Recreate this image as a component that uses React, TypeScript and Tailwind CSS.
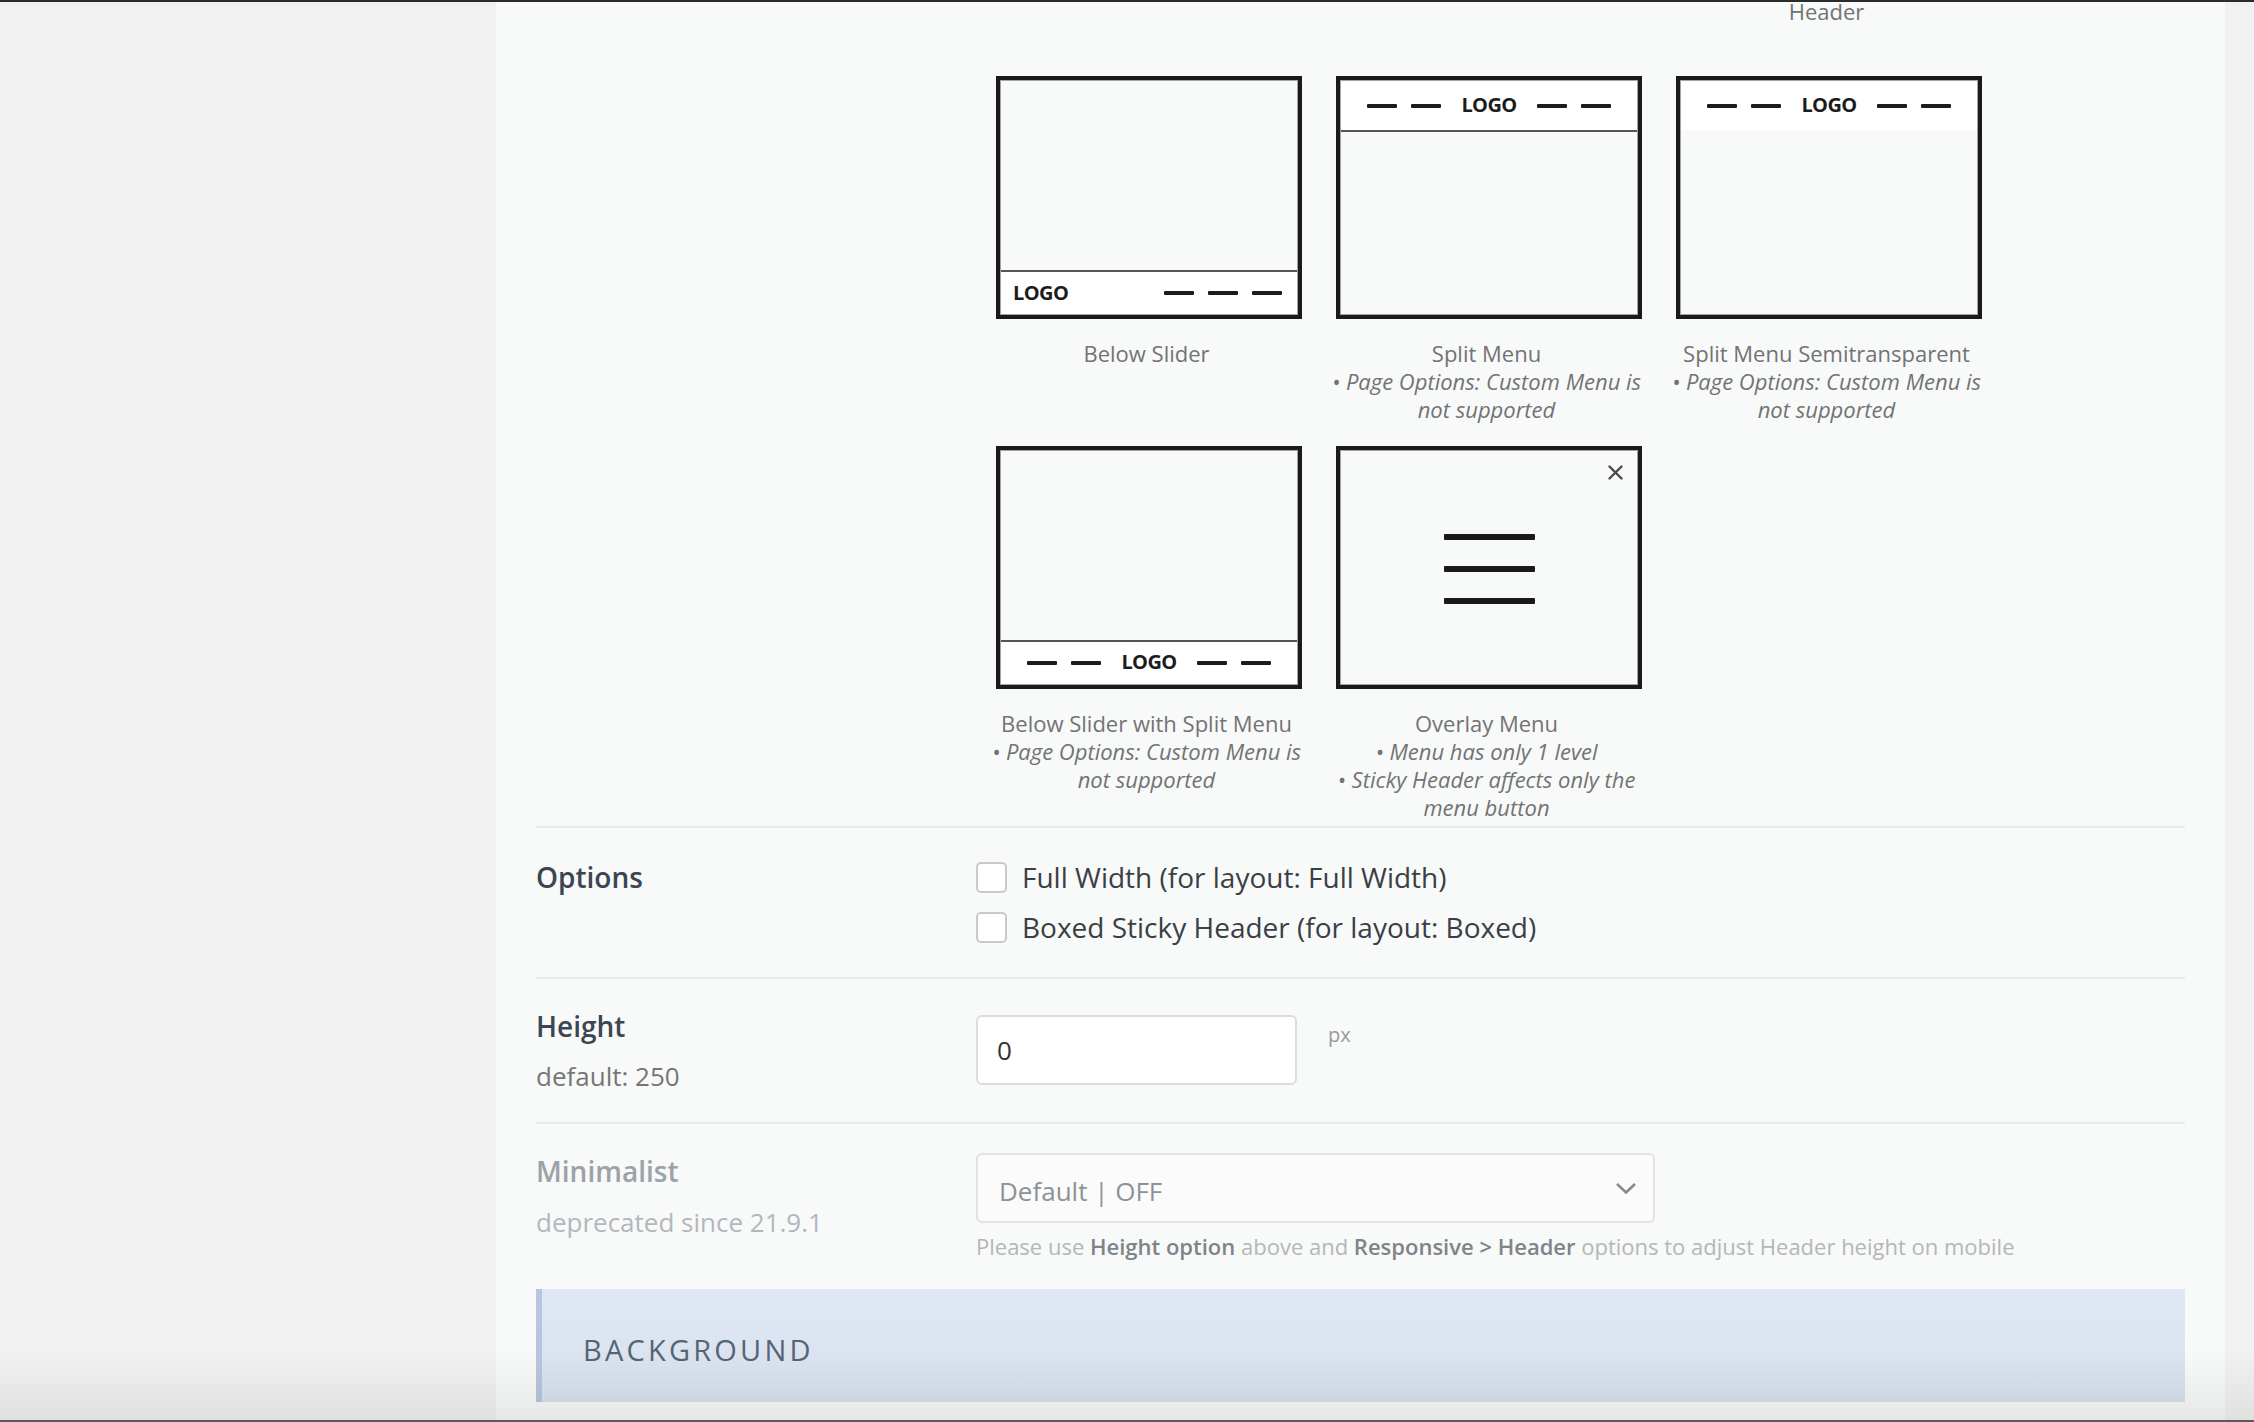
import React from "react";

function Dash() {
  return <span className="block h-[4px] w-[30px] rounded-[1px] bg-[#1c1c1c]" />;
}

function Logo() {
  return (
    <span className="text-[20px] font-bold leading-none tracking-[-0.6px] text-[#1c1c1c]">
      LOGO
    </span>
  );
}

function SplitGroup() {
  return (
    <div className="flex items-center">
      <Dash />
      <span className="ml-[14px]">
        <Dash />
      </span>
      <span className="ml-[20px]">
        <Logo />
      </span>
      <span className="ml-[20px]">
        <Dash />
      </span>
      <span className="ml-[14px]">
        <Dash />
      </span>
    </div>
  );
}

function Frame({ children, relative }: { children?: React.ReactNode; relative?: boolean }) {
  return (
    <div className="mx-auto h-[243px] w-[306px] border-4 border-[#1a1a1a] bg-[#f8f9f9]">
      <div className={`flex h-full flex-col border border-[#a3a3a3] ${relative ? "relative" : ""}`}>
        {children}
      </div>
    </div>
  );
}

function Caption({ title, notes }: { title: string; notes?: string[] }) {
  return (
    <div className="mt-[20px] pr-[5px] text-center text-[22px] leading-[28px] text-[#737373]">
      <div>{title}</div>
      {notes?.map((n) => (
        <div key={n} className="italic">
          {"\u2022 " + n}
        </div>
      ))}
    </div>
  );
}

function Item({ children, title, notes }: { children: React.ReactNode; title: string; notes?: string[] }) {
  return (
    <div className="w-[340px]">
      {children}
      <Caption title={title} notes={notes} />
    </div>
  );
}

export default function App() {
  const cm = "Page Options: Custom Menu is not supported";
  return (
    <div className="relative flex h-[1422px] w-full flex-col overflow-hidden font-['Open_Sans',sans-serif]">
      <div className="h-[2px] shrink-0 bg-[#2c2c2c]" />
      <div className="flex min-h-0 flex-1">
        <aside className="w-[496px] shrink-0 bg-[#f1f1f1]" />
        <main className="flex w-[1729px] shrink-0 flex-col bg-[#f8f9f9] px-[40px]">
          {/* Layout choices */}
          <section className="border-b-2 border-[#e8ebeb] pb-[5px] pl-[443px]">
            <div className="-mt-[5px] grid grid-cols-[340px_340px_340px]">
              <div />
              <div />
              <div className="pr-[5px] text-center text-[22px] leading-[28px] text-[#737373]">Header</div>
            </div>
            <div className="mt-[51px] grid grid-cols-[340px_340px_340px]">
              <Item title="Below Slider">
                <Frame>
                  <div className="flex-1" />
                  <div className="flex h-[44px] items-center justify-between border-t-2 border-[#555] bg-white pl-[12px] pr-[15px]">
                    <Logo />
                    <div className="flex items-center gap-[14px]">
                      <Dash />
                      <Dash />
                      <Dash />
                    </div>
                  </div>
                </Frame>
              </Item>
              <Item title="Split Menu" notes={[cm]}>
                <Frame>
                  <div className="flex h-[51px] items-center justify-center border-b-2 border-[#555] bg-white">
                    <SplitGroup />
                  </div>
                  <div className="flex-1" />
                </Frame>
              </Item>
              <Item title="Split Menu Semitransparent" notes={[cm]}>
                <Frame>
                  <div className="flex h-[49px] items-center justify-center bg-white">
                    <SplitGroup />
                  </div>
                  <div className="flex-1" />
                </Frame>
              </Item>
            </div>
            <div className="mt-[23px] grid grid-cols-[340px_340px_340px]">
              <Item title="Below Slider with Split Menu" notes={[cm]}>
                <Frame>
                  <div className="flex-1" />
                  <div className="flex h-[44px] items-center justify-center border-t-2 border-[#555] bg-white">
                    <SplitGroup />
                  </div>
                </Frame>
              </Item>
              <Item
                title="Overlay Menu"
                notes={["Menu has only 1 level", "Sticky Header affects only the menu button"]}
              >
                <Frame relative>
                  <svg
                    className="absolute right-[14px] top-[14px]"
                    width="15"
                    height="15"
                    viewBox="0 0 15 15"
                  >
                    <path d="M1.5 1.5 L13.5 13.5 M13.5 1.5 L1.5 13.5" stroke="#4a4a4a" strokeWidth="2.4" strokeLinecap="round" />
                  </svg>
                  <div className="flex flex-1 items-center justify-center">
                    <div className="mt-[3px] flex flex-col gap-[26px]">
                      <span className="block h-[6px] w-[91px] rounded-[1px] bg-[#1a1a1a]" />
                      <span className="block h-[6px] w-[91px] rounded-[1px] bg-[#1a1a1a]" />
                      <span className="block h-[6px] w-[91px] rounded-[1px] bg-[#1a1a1a]" />
                    </div>
                  </div>
                </Frame>
              </Item>
              <div />
            </div>
          </section>

          {/* Options */}
          <section className="flex border-b-2 border-[#e8ebeb] pb-[25px] pt-[24px]">
            <div className="w-[440px] shrink-0 text-[28px] font-semibold leading-[50px] text-[#3b4652]">
              Options
            </div>
            <div className="flex flex-col">
              {["Full Width (for layout: Full Width)", "Boxed Sticky Header (for layout: Boxed)"].map((t) => (
                <label key={t} className="flex h-[50px] items-center">
                  <span className="block h-[31px] w-[31px] rounded-[5px] border-2 border-[#c9c9c9] bg-white" />
                  <span className="ml-[15px] text-[28px] leading-[38px] text-[#3a3f45]">{t}</span>
                </label>
              ))}
            </div>
          </section>

          {/* Height */}
          <section className="flex items-start border-b-2 border-[#e8ebeb] pb-[27px]">
            <div className="w-[440px] shrink-0 pt-[28px]">
              <div className="text-[28px] font-semibold leading-[38px] text-[#3b4652]">Height</div>
              <div className="mt-[12px] text-[26px] leading-[38px] text-[#767676]">default: 250</div>
            </div>
            <div className="flex items-start pt-[36px]">
              <div className="flex h-[70px] w-[321px] items-center rounded-[6px] border-2 border-[#dcdcdc] bg-white pl-[19px] text-[26px] text-[#333]">
                0
              </div>
              <span className="ml-[31px] mt-[6px] text-[20px] leading-[28px] text-[#9a9a9a]">px</span>
            </div>
          </section>

          {/* Minimalist */}
          <section className="flex items-start pb-[29px]">
            <div className="w-[440px] shrink-0 pt-[28px]">
              <div className="text-[28px] font-semibold leading-[38px] text-[#9ca2a7]">Minimalist</div>
              <div className="mt-[13px] text-[26px] leading-[38px] text-[#b3b7bb]">deprecated since 21.9.1</div>
            </div>
            <div className="flex flex-col pt-[29px]">
              <div className="flex h-[70px] w-[679px] items-center justify-between rounded-[6px] border-2 border-[#e1e1e1] bg-[#fbfbfb] pl-[21px] pr-[16px]">
                <span className="mt-[6px] text-[26px] text-[#8d9296]">Default | OFF</span>
                <svg width="22" height="13" viewBox="0 0 22 13">
                  <path d="M2 2 L11 10.5 L20 2" fill="none" stroke="#8a8a8a" strokeWidth="2.6" />
                </svg>
              </div>
              <div className="mt-[9px] whitespace-nowrap text-[22px] leading-[28px] text-[#b3b7ba]">
                Please use <b className="font-semibold text-[#7f8488]">Height option</b> above and{" "}
                <b className="font-semibold text-[#7f8488]">Responsive &gt; Header</b> options to adjust Header height on mobile
              </div>
            </div>
          </section>

          {/* Background */}
          <div className="flex h-[113px] shrink-0 items-center border-l-[6px] border-[#b7c5de] bg-gradient-to-b from-[#dfe7f5] to-[#d9e1ee] pl-[41px] pt-[8px]">
            <span className="text-[29px] leading-[40px] tracking-[3.2px] text-[#566573]">BACKGROUND</span>
          </div>
          <div className="flex-1" />
        </main>
        <div className="flex-1 bg-[#f1f1f1]" />
      </div>
      <div className="h-[2px] shrink-0 bg-[#5a5a5a]" />
      <div className="pointer-events-none absolute inset-x-0 bottom-[2px] h-[70px] bg-gradient-to-b from-transparent to-black/[0.07]" />
    </div>
  );
}
